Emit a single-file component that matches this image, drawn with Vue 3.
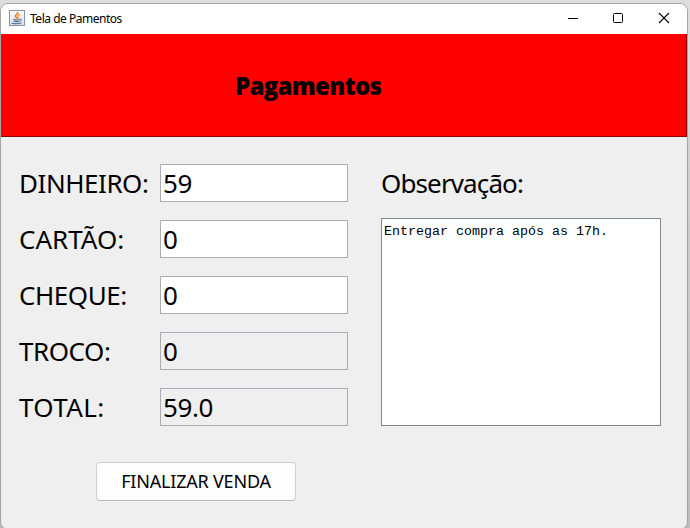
<script setup>
import { ref } from 'vue'

const fields = ref([
  { id: 'dinheiro', label: 'DINHEIRO:', value: '59', locked: false },
  { id: 'cartao', label: 'CARTÃO:', value: '0', locked: false },
  { id: 'cheque', label: 'CHEQUE:', value: '0', locked: false },
  { id: 'troco', label: 'TROCO:', value: '0', locked: true },
  { id: 'total', label: 'TOTAL:', value: '59.0', locked: true },
])
const note = ref('Entregar compra após as 17h.')
</script>

<template>
  <div class="desktop">
    <main class="window">
      <header class="titlebar">
        <svg class="java" width="16" height="16" viewBox="0 0 16 16">
          <defs>
            <linearGradient id="tile" x1="0" y1="0" x2="0" y2="1">
              <stop offset="0" stop-color="#fdfdfd" />
              <stop offset="1" stop-color="#d5dde4" />
            </linearGradient>
          </defs>
          <rect x=".5" y=".5" width="15" height="15" fill="url(#tile)" stroke="#8294a5" />
          <g fill="none" stroke-linecap="round">
            <path d="M8.8 2.4C9.2 4 5.6 4.8 6.4 6.6L7.6 8" stroke="#e67817" stroke-width="1.5" />
            <path d="M10.5 4.6C8 5.8 9.4 6.6 8.6 8.2" stroke="#ef8c27" stroke-width="1.3" />
            <path d="M4.6 9.4C6 10 8.4 10 10 9.4M5.2 11.3Q7.5 11.9 9.7 11.3M3 13.2Q7.6 14.3 12 13" stroke="#4a6f8e" stroke-width="1.1" />
            <path d="M10.8 9C13.2 8.7 12.7 10.8 10.7 11.2" stroke="#4a6f8e" stroke-width="1" />
          </g>
        </svg>
        <span class="caption">Tela de Pamentos</span>
        <svg class="controls" width="104" height="12" viewBox="0 0 104 12" fill="none" stroke="#000">
          <path d="M0 6.5H10" />
          <rect x="45.5" y="1.5" width="9" height="9" rx="1" />
          <path d="M91 1L101 11M101 1L91 11" stroke-width="1.1" />
        </svg>
      </header>

      <section class="banner"><h1>Pagamentos</h1></section>

      <div class="body">
        <form class="form" @submit.prevent>
          <div v-for="f in fields" :key="f.id" class="row">
            <label :for="f.id"><span :class="['label', f.id]">{{ f.label }}</span></label>
            <input :id="f.id" v-model="f.value" :readonly="f.locked" :class="{ locked: f.locked }" type="text" autocomplete="off" />
          </div>
          <button type="submit"><span>FINALIZAR VENDA</span></button>
        </form>
        <section class="notes">
          <label for="note"><span class="label observacao">Observação:</span></label>
          <textarea id="note" v-model="note" spellcheck="false"></textarea>
        </section>
      </div>
    </main>
  </div>
</template>

<style>
body {
  overflow: hidden;
  background: #d9d9d9;
}
</style>

<style scoped>
* {
  box-sizing: border-box;
}
.desktop {
  height: 528px;
  padding-top: 3px;
  overflow: hidden;
  background: linear-gradient(#dedede, #d0d0d0 30%, #bdbdbd);
  font-family: "Noto Sans", sans-serif;
  color: #000;
}
.window {
  width: 688px;
  height: 527px;
  border: 1px solid #a5a5a5;
  border-radius: 8px;
  overflow: hidden;
  background: #efefef;
}
.titlebar {
  display: flex;
  align-items: center;
  height: 30px;
  padding: 0 15px 0 8px;
  background: #fff;
}
.java {
  margin-top: -2px;
}
.caption {
  margin-left: 5px;
  font-size: 12px;
  line-height: 16px;
  letter-spacing: -0.48px;
}
.controls {
  margin: -2px 0 0 auto;
}
.banner {
  height: 103px;
  padding: 35px 0 0 234px;
  background: #f00;
  border-bottom: 1px solid #8b0000;
  border-right: 1px solid #8b0000;
}
h1 {
  margin: 0;
  font-family: "Open Sans", sans-serif;
  font-size: 24px;
  line-height: 33px;
  font-weight: 800;
  letter-spacing: -0.7px;
}
.body {
  display: flex;
  gap: 33px;
  padding: 27px 0 0 18px;
}
.form {
  display: flex;
  flex-direction: column;
  gap: 18px;
  width: 329px;
}
.row {
  display: flex;
  height: 38px;
}
.row label {
  width: 141px;
}
.label {
  font-size: 26px;
  line-height: 38px;
  letter-spacing: -0.45px;
  white-space: nowrap;
}
.label.cartao {
  letter-spacing: 0;
}
.label.total {
  letter-spacing: 0.4px;
}
.label.observacao {
  letter-spacing: -0.88px;
}
input {
  width: 188px;
  height: 38px;
  padding: 0 2px;
  border: 1px solid #abadb3;
  border-radius: 0;
  outline: 0;
  background: #fff;
  font: 26px/36px "Noto Sans", sans-serif;
  letter-spacing: -0.4px;
  color: #000;
}
input.locked {
  background: #efefef;
}
button {
  width: 200px;
  height: 39px;
  margin: 18px 0 0 77px;
  padding: 0;
  border: 1px solid #d0d0d0;
  border-bottom-color: #b9b9b9;
  border-radius: 4px;
  background: #fdfdfd;
  font: 18px/37px "Noto Sans", sans-serif;
  letter-spacing: -0.2px;
  color: #000;
}
.notes {
  display: flex;
  flex-direction: column;
  gap: 16px;
}
.notes label {
  height: 38px;
}
textarea {
  width: 280px;
  height: 208px;
  padding: 4px 2px;
  border: 1px solid #828790;
  border-radius: 0;
  outline: 0;
  resize: none;
  background: #fff;
  font: 13.33px/17px "Liberation Mono", monospace;
  color: #000;
}
</style>
